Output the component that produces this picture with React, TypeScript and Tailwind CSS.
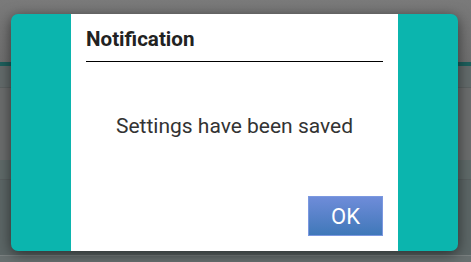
import React from "react";

export default function App() {
  return (
    <div className="relative h-[262px] w-[471px] overflow-hidden bg-[#6f7171] font-['Roboto',sans-serif]">
      {/* dimmed page behind the modal */}
      <div className="flex h-full flex-col">
        <div className="h-[62px] bg-gradient-to-b from-[#7a7a7a] to-[#6f6f6f]" />
        <div className="h-[4px] bg-[#1d5f5c]" />
        <div className="h-[22px] border-b border-[#5c6262] bg-[#636b6b]" />
        <div className="h-[72px] bg-[#6b6d6d]" />
        <div className="h-[20px] border-b border-[#586060] bg-[#5f6a69]" />
        <div className="h-[75px] bg-[#5c6666]" />
        <div className="flex-1 border-t border-[#7a8080] bg-[#687070]" />
      </div>

      <div className="absolute left-[11px] top-[14px] flex h-[237px] w-[447px] overflow-hidden rounded-[7px] bg-[#0bb5ae] shadow-[0_3px_14px_rgba(0,0,0,0.55)]">
        <div className="w-[60px]" />
        <div className="flex w-[327px] flex-col bg-white px-[15px]">
          <div className="border-b border-black pb-[10px] pt-[13px] text-[20.6px] font-bold leading-[24px] text-[#222]">
            Notification
          </div>
          <div className="mt-[52px] text-center text-[21px] leading-[25px] text-[#333]">
            Settings have been saved
          </div>
          <div className="mt-auto mb-[15px] flex justify-end">
            <button className="h-[40px] w-[75px] border border-[#7b98e0] bg-gradient-to-b from-[#6e8cd9] to-[#3f78b9] text-[22px] text-white">
              OK
            </button>
          </div>
        </div>
        <div className="flex-1" />
      </div>
    </div>
  );
}
